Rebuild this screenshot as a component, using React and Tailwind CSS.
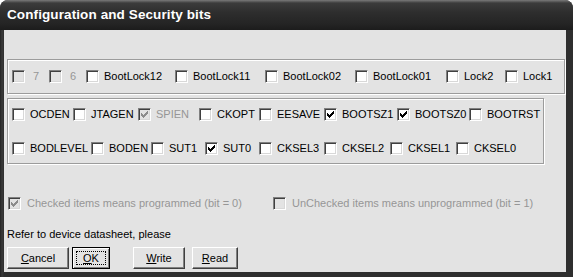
import clsx from 'clsx';

const topBits = [
  { label: '7', w: 'w-[37px]', disabled: true, gap: 'ml-[8px]' },
  { label: '6', w: 'w-[37px]', disabled: true, gap: 'ml-[8px]' },
  { label: 'BootLock12', w: 'w-[89px]' },
  { label: 'BootLock11', w: 'w-[90px]' },
  { label: 'BootLock02', w: 'w-[90px]' },
  { label: 'BootLock01', w: 'w-[91px]' },
  { label: 'Lock2', w: 'w-[59px]' },
  { label: 'Lock1', w: 'w-[50px]' },
];

const fuseRow1 = [
  { label: 'OCDEN', w: 'w-[61px]' },
  { label: 'JTAGEN', w: 'w-[65px]' },
  { label: 'SPIEN', w: 'w-[61px]', checked: true, disabled: true },
  { label: 'CKOPT', w: 'w-[60px]' },
  { label: 'EESAVE', w: 'w-[65px]' },
  { label: 'BOOTSZ1', w: 'w-[73px]', checked: true },
  { label: 'BOOTSZ0', w: 'w-[72px]', checked: true },
  { label: 'BOOTRST', w: 'w-[66px]' },
];

const fuseRow2 = [
  { label: 'BODLEVEL', w: 'w-[79px]' },
  { label: 'BODEN', w: 'w-[60px]' },
  { label: 'SUT1', w: 'w-[54px]' },
  { label: 'SUT0', w: 'w-[54px]', checked: true },
  { label: 'CKSEL3', w: 'w-[65px]' },
  { label: 'CKSEL2', w: 'w-[66px]' },
  { label: 'CKSEL1', w: 'w-[66px]' },
  { label: 'CKSEL0', w: 'w-[60px]' },
];

// classic 7x7 tick, one 3px column per x
const tick = [2, 3, 4, 3, 2, 1, 0];

const Box = ({ checked, disabled }) => (
  <span
    className={clsx(
      'flex items-center justify-center w-[13px] h-[13px] shrink-0 border border-t-[#808080] border-l-[#808080] border-b-white border-r-white shadow-[inset_1px_1px_0_#404040,inset_-1px_-1px_0_#d8d8d8]',
      disabled ? 'bg-[#e3e3e3]' : 'bg-white'
    )}
  >
    {checked && (
      <svg width="7" height="7" viewBox="0 0 7 7" shapeRendering="crispEdges">
        {tick.map((y, x) => (
          <rect key={x} x={x} y={y} width="1" height="3" fill={disabled ? '#8c8c8c' : '#000'} />
        ))}
      </svg>
    )}
  </span>
);

const Item = ({ label, w, checked, disabled, gap = 'ml-[5px]' }) => (
  <div className={clsx('flex items-center h-[13px] shrink-0', w)}>
    <Box checked={checked} disabled={disabled} />
    <span className={clsx('whitespace-nowrap leading-[13px]', gap, disabled ? 'text-[#969696]' : 'text-black')}>{label}</span>
  </div>
);

const Button = ({ children, w, focused }) => (
  <button
    className={clsx(
      'h-[22px] shrink-0 bg-[#e3e3e3] leading-none',
      w,
      focused
        ? 'border border-black shadow-[inset_1px_1px_0_#fff,inset_-1px_-1px_0_#808080] p-[3px]'
        : 'border border-t-white border-l-white border-b-[#404040] border-r-[#404040] shadow-[inset_-1px_-1px_0_#808080]'
    )}
  >
    {focused ? (
      <span className="flex items-center justify-center w-full h-full border border-dotted border-black">{children}</span>
    ) : (
      <span className="flex items-center justify-center w-full h-full">{children}</span>
    )}
  </button>
);

const Mn = ({ first, rest }) => (
  <span>
    <span className="underline underline-offset-[1px]">{first}</span>
    {rest}
  </span>
);

const groupBox = 'border border-[#9c9c9c] shadow-[inset_1px_1px_0_#fff,1px_1px_0_#fff]';

export default function App() {
  return (
    <div className="w-[573px] h-[277px] flex flex-col rounded-t-[8px] bg-[#2e2e2e] font-['Liberation_Sans',Arial,sans-serif] text-[11px] overflow-hidden">
      <div className="h-[30px] shrink-0 flex items-center pl-[7px] pt-[1px] bg-[linear-gradient(to_bottom,#7a7a7a_0px,#3c3c3c_3px,#2e2e2e_12px,#242424_24px,#1c1c1c_30px)]">
        <span className="text-white font-bold text-[13.5px] tracking-[0.1px]">Configuration and Security bits</span>
      </div>

      <div className="flex-1 flex pl-[4px] pr-[7px] pb-[5px] bg-[linear-gradient(to_right,#222_0px,#3a3a3a_2px,#2e2e2e_4px)]">
        <div className="flex-1 flex flex-col bg-[#e3e3e3] pl-[3px]">
          <div className={clsx('mt-[29px] h-[35px] w-[558px] flex items-center pl-[4px]', groupBox)}>
            {topBits.map((b) => (
              <Item key={b.label} {...b} />
            ))}
          </div>

          <div className={clsx('mt-[4px] h-[66px] w-[537px] flex flex-col gap-[21px] pt-[9px] pl-[4px]', groupBox)}>
            <div className="flex items-center h-[13px]">
              {fuseRow1.map((b) => (
                <Item key={b.label} {...b} />
              ))}
            </div>
            <div className="flex items-center h-[13px]">
              {fuseRow2.map((b) => (
                <Item key={b.label} {...b} />
              ))}
            </div>
          </div>

          <div className="mt-[33px] flex items-center h-[13px] pl-[1px]">
            <Item label="Checked items means programmed (bit = 0)" w="w-[265px]" checked disabled gap="ml-[6px]" />
            <Item label="UnChecked items means unprogrammed (bit = 1)" w="w-[270px]" disabled gap="ml-[6px]" />
          </div>

          <div className="mt-[18px] leading-[13px] text-black">Refer to device datasheet, please</div>

          <div className="mt-[6px] flex items-center text-black">
            <Button w="w-[62px]"><Mn first="C" rest="ancel" /></Button>
            <div className="ml-[3px]">
              <Button w="w-[38px]" focused><Mn first="O" rest="K" /></Button>
            </div>
            <div className="ml-[23px]">
              <Button w="w-[52px]"><Mn first="W" rest="rite" /></Button>
            </div>
            <div className="ml-[7px]">
              <Button w="w-[46px]"><Mn first="R" rest="ead" /></Button>
            </div>
          </div>
        </div>
      </div>
    </div>
  );
}
